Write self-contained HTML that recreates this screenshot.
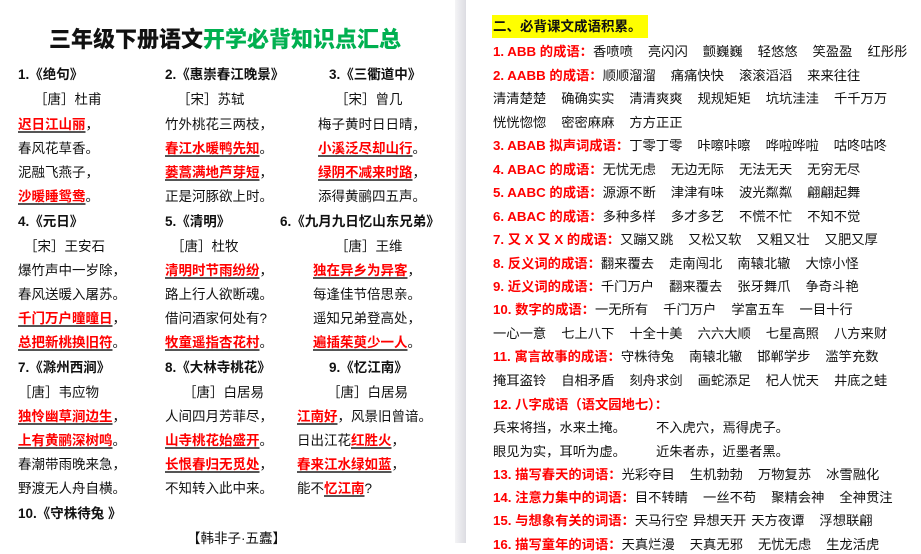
<!DOCTYPE html>
<html><head><meta charset="utf-8"><style>
*{margin:0;padding:0}
body{width:921px;height:543px;overflow:hidden;background:#fff;position:relative;font-family:"Liberation Sans","Noto Sans CJK SC",sans-serif;color:#111}
.t{position:absolute;font-size:13.5px;line-height:18px;white-space:nowrap}
.h{font-weight:bold}
.r{color:#f00;font-weight:bold;text-decoration:underline;text-decoration-color:#555;text-decoration-thickness:1.5px;text-underline-offset:2px}
.rr{color:#f00;font-weight:bold}
.gap{position:absolute;left:455px;top:0;width:11px;height:543px;background:linear-gradient(to right,#f4f4f6,#e6e6ea 60%,#dcdce2)}
.R{position:absolute;left:493px;font-size:13.3px;line-height:18px;white-space:nowrap}
.R span.i{margin-right:15px}
</style></head><body>
<div class="gap"></div>
<div class="t" style="left:49px;top:27px;font-size:22px;line-height:26px;font-weight:900">三年级下册语文<span style="color:#00b050">开学必背知识点汇总</span></div>

<div class="t h" style="left:18px;top:66px">1.《绝句》</div>
<div class="t h" style="left:165px;top:66px">2.《惠崇春江晚景》</div>
<div class="t h" style="left:329px;top:66px">3.《三衢道中》</div>
<div class="t" style="left:34px;top:91px">［唐］杜甫</div>
<div class="t" style="left:177px;top:91px">［宋］苏轼</div>
<div class="t" style="left:335px;top:91px">［宋］曾几</div>
<div class="t" style="left:18px;top:116px"><span class="r">迟日江山丽</span>，</div>
<div class="t" style="left:18px;top:140px">春风花草香。</div>
<div class="t" style="left:18px;top:164px">泥融飞燕子，</div>
<div class="t" style="left:18px;top:188px"><span class="r">沙暖睡鸳鸯</span>。</div>
<div class="t" style="left:165px;top:116px">竹外桃花三两枝，</div>
<div class="t" style="left:165px;top:140px"><span class="r">春江水暖鸭先知</span>。</div>
<div class="t" style="left:165px;top:164px"><span class="r">蒌蒿满地芦芽短</span>，</div>
<div class="t" style="left:165px;top:188px">正是河豚欲上时。</div>
<div class="t" style="left:318px;top:116px">梅子黄时日日晴，</div>
<div class="t" style="left:318px;top:140px"><span class="r">小溪泛尽却山行</span>。</div>
<div class="t" style="left:318px;top:164px"><span class="r">绿阴不减来时路</span>，</div>
<div class="t" style="left:318px;top:188px">添得黄鹂四五声。</div>

<div class="t h" style="left:18px;top:213px">4.《元日》</div>
<div class="t h" style="left:165px;top:213px">5.《清明》</div>
<div class="t h" style="left:280px;top:213px">6.《九月九日忆山东兄弟》</div>
<div class="t" style="left:24px;top:238px">［宋］王安石</div>
<div class="t" style="left:171px;top:238px">［唐］杜牧</div>
<div class="t" style="left:335px;top:238px">［唐］王维</div>
<div class="t" style="left:18px;top:262px">爆竹声中一岁除，</div>
<div class="t" style="left:18px;top:286px">春风送暖入屠苏。</div>
<div class="t" style="left:18px;top:310px"><span class="r">千门万户曈曈日</span>，</div>
<div class="t" style="left:18px;top:334px"><span class="r">总把新桃换旧符</span>。</div>
<div class="t" style="left:165px;top:262px"><span class="r">清明时节雨纷纷</span>，</div>
<div class="t" style="left:165px;top:286px">路上行人欲断魂。</div>
<div class="t" style="left:165px;top:310px">借问酒家何处有?</div>
<div class="t" style="left:165px;top:334px"><span class="r">牧童遥指杏花村</span>。</div>
<div class="t" style="left:313px;top:262px"><span class="r">独在异乡为异客</span>，</div>
<div class="t" style="left:313px;top:286px">每逢佳节倍思亲。</div>
<div class="t" style="left:313px;top:310px">遥知兄弟登高处，</div>
<div class="t" style="left:313px;top:334px"><span class="r">遍插茱萸少一人</span>。</div>

<div class="t h" style="left:18px;top:359px">7.《滁州西涧》</div>
<div class="t h" style="left:165px;top:359px">8.《大林寺桃花》</div>
<div class="t h" style="left:329px;top:359px">9.《忆江南》</div>
<div class="t" style="left:18px;top:384px">［唐］韦应物</div>
<div class="t" style="left:183px;top:384px">［唐］白居易</div>
<div class="t" style="left:327px;top:384px">［唐］白居易</div>
<div class="t" style="left:18px;top:408px"><span class="r">独怜幽草涧边生</span>，</div>
<div class="t" style="left:18px;top:432px"><span class="r">上有黄鹂深树鸣</span>。</div>
<div class="t" style="left:18px;top:456px">春潮带雨晚来急，</div>
<div class="t" style="left:18px;top:480px">野渡无人舟自横。</div>
<div class="t" style="left:165px;top:408px">人间四月芳菲尽，</div>
<div class="t" style="left:165px;top:432px"><span class="r">山寺桃花始盛开</span>。</div>
<div class="t" style="left:165px;top:456px"><span class="r">长恨春归无觅处</span>，</div>
<div class="t" style="left:165px;top:480px">不知转入此中来。</div>
<div class="t" style="left:297px;top:408px"><span class="r">江南好</span>，风景旧曾谙。</div>
<div class="t" style="left:297px;top:432px">日出江花<span class="r">红胜火</span>，</div>
<div class="t" style="left:297px;top:456px"><span class="r">春来江水绿如蓝</span>，</div>
<div class="t" style="left:297px;top:480px">能不<span class="r">忆江南</span>?</div>
<div class="t h" style="left:18px;top:505px">10.《守株待兔 》</div>
<div class="t" style="left:187px;top:530px">【韩非子·五蠹】</div>

<div class="R" style="left:492px;top:15px;height:23px;line-height:23px;padding:0 6px 0 1px;background:#ff0;font-weight:bold;font-size:13.5px">二、必背课文成语积累。</div>
<div class="R" style="top:43px"><span class="rr">1. ABB 的成语：</span><span class="i">香喷喷</span><span class="i">亮闪闪</span><span class="i">颤巍巍</span><span class="i">轻悠悠</span><span class="i">笑盈盈</span><span>红彤彤</span></div>
<div class="R" style="top:67px"><span class="rr">2. AABB 的成语：</span><span class="i">顺顺溜溜</span><span class="i">痛痛快快</span><span class="i">滚滚滔滔</span><span>来来往往</span></div>
<div class="R" style="top:90px"><span class="i">清清楚楚</span><span class="i">确确实实</span><span class="i">清清爽爽</span><span class="i">规规矩矩</span><span class="i">坑坑洼洼</span><span>千千万万</span></div>
<div class="R" style="top:114px"><span class="i">恍恍惚惚</span><span class="i">密密麻麻</span><span>方方正正</span></div>
<div class="R" style="top:137px"><span class="rr">3. ABAB 拟声词成语：</span><span class="i">丁零丁零</span><span class="i">咔嚓咔嚓</span><span class="i">哗啦哗啦</span><span>咕咚咕咚</span></div>
<div class="R" style="top:161px"><span class="rr">4. ABAC 的成语：</span><span class="i">无忧无虑</span><span class="i">无边无际</span><span class="i">无法无天</span><span>无穷无尽</span></div>
<div class="R" style="top:184px"><span class="rr">5. AABC 的成语：</span><span class="i">源源不断</span><span class="i">津津有味</span><span class="i">波光粼粼</span><span>翩翩起舞</span></div>
<div class="R" style="top:208px"><span class="rr">6. ABAC 的成语：</span><span class="i">多种多样</span><span class="i">多才多艺</span><span class="i">不慌不忙</span><span>不知不觉</span></div>
<div class="R" style="top:231px"><span class="rr">7. 又 X 又 X 的成语：</span><span class="i">又蹦又跳</span><span class="i">又松又软</span><span class="i">又粗又壮</span><span>又肥又厚</span></div>
<div class="R" style="top:255px"><span class="rr">8. 反义词的成语：</span><span class="i">翻来覆去</span><span class="i">走南闯北</span><span class="i">南辕北辙</span><span>大惊小怪</span></div>
<div class="R" style="top:278px"><span class="rr">9. 近义词的成语：</span><span class="i">千门万户</span><span class="i">翻来覆去</span><span class="i">张牙舞爪</span><span>争奇斗艳</span></div>
<div class="R" style="top:301px"><span class="rr">10. 数字的成语：</span><span class="i">一无所有</span><span class="i">千门万户</span><span class="i">学富五车</span><span>一目十行</span></div>
<div class="R" style="top:325px"><span class="i">一心一意</span><span class="i">七上八下</span><span class="i">十全十美</span><span class="i">六六大顺</span><span class="i">七星高照</span><span>八方来财</span></div>
<div class="R" style="top:348px"><span class="rr">11. 寓言故事的成语：</span><span class="i">守株待兔</span><span class="i">南辕北辙</span><span class="i">邯郸学步</span><span>滥竽充数</span></div>
<div class="R" style="top:372px"><span class="i">掩耳盗铃</span><span class="i">自相矛盾</span><span class="i">刻舟求剑</span><span class="i">画蛇添足</span><span class="i">杞人忧天</span><span>井底之蛙</span></div>
<div class="R" style="top:396px"><span class="rr">12. 八字成语（语文园地七）：</span></div>
<div class="R" style="top:419px">兵来将挡，水来土掩。<span style="display:inline-block;width:30px"></span>不入虎穴，焉得虎子。</div>
<div class="R" style="top:443px">眼见为实，耳听为虚。<span style="display:inline-block;width:30px"></span>近朱者赤，近墨者黑。</div>
<div class="R" style="top:466px"><span class="rr">13. 描写春天的词语：</span><span class="i">光彩夺目</span><span class="i">生机勃勃</span><span class="i">万物复苏</span><span>冰雪融化</span></div>
<div class="R" style="top:489px"><span class="rr">14. 注意力集中的词语：</span><span class="i">目不转睛</span><span class="i">一丝不苟</span><span class="i">聚精会神</span><span>全神贯注</span></div>
<div class="R" style="top:512px"><span class="rr">15. 与想象有关的词语：</span><span style="margin-right:5px">天马行空</span><span style="margin-right:5px">异想天开</span><span class="i">天方夜谭</span><span>浮想联翩</span></div>
<div class="R" style="top:536px"><span class="rr">16. 描写童年的词语：</span><span class="i">天真烂漫</span><span class="i">天真无邪</span><span class="i">无忧无虑</span><span>生龙活虎</span></div>
</body></html>
